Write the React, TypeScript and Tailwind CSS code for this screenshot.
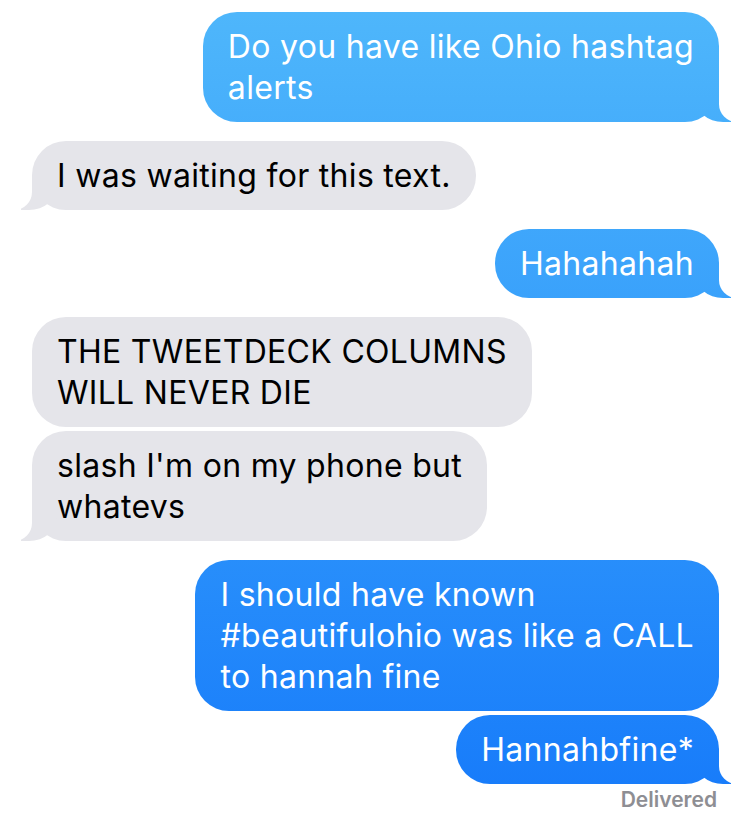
import clsx from "clsx";

type Message = {
  fromMe: boolean;
  lines: string[];
  tail: boolean;
};

const messages: Message[] = [
  { fromMe: true, lines: ["Do you have like Ohio hashtag", "alerts"], tail: true },
  { fromMe: false, lines: ["I was waiting for this text."], tail: true },
  { fromMe: true, lines: ["Hahahahah"], tail: true },
  { fromMe: false, lines: ["THE TWEETDECK COLUMNS", "WILL NEVER DIE"], tail: false },
  { fromMe: false, lines: ["slash I'm on my phone but", "whatevs"], tail: true },
  {
    fromMe: true,
    lines: ["I should have known", "#beautifulohio was like a CALL", "to hannah fine"],
    tail: false,
  },
  { fromMe: true, lines: ["Hannahbfine*"], tail: true },
];

function Bubble({ msg, first, sameAsPrev }: { msg: Message; first: boolean; sameAsPrev: boolean }) {
  return (
    <div
      className={clsx(
        "relative rounded-[34px] px-[25px] py-[14px] text-[32px] leading-[41px] tracking-[0.3px]",
        !first && (sameAsPrev ? "mt-[4px]" : "mt-[19px]"),
        msg.fromMe
          ? "self-end bg-fixed bg-linear-to-b from-[#4fb7fb] to-[#167afa] text-white"
          : "self-start bg-[#e5e5ea] text-black"
      )}
    >
      {msg.lines.map((line) => (
        <div key={line} className="relative z-10 whitespace-nowrap">
          {line}
        </div>
      ))}
      {msg.tail && msg.fromMe && (
        <>
          <span className="absolute bottom-0 -right-[12px] h-[34px] w-[36px] rounded-bl-[28px_24px] bg-fixed bg-linear-to-b from-[#4fb7fb] to-[#167afa]" />
          <span className="absolute bottom-0 -right-[44px] h-[34px] w-[44px] rounded-bl-[18px] bg-white" />
        </>
      )}
      {msg.tail && !msg.fromMe && (
        <>
          <span className="absolute bottom-0 -left-[11px] h-[34px] w-[36px] rounded-br-[28px_24px] bg-[#e5e5ea]" />
          <span className="absolute bottom-0 -left-[44px] h-[34px] w-[44px] rounded-br-[18px] bg-white" />
        </>
      )}
    </div>
  );
}

export default function App() {
  return (
    <div className="min-h-screen bg-white pl-[32px] pr-[31px] pt-[12px] font-['Inter','Helvetica_Neue',sans-serif] antialiased">
      <div className="flex flex-col">
        {messages.map((msg, i) => (
          <Bubble
            key={i}
            msg={msg}
            first={i === 0}
            sameAsPrev={i > 0 && messages[i - 1].fromMe === msg.fromMe}
          />
        ))}
        <div className="mt-[4px] self-end pr-[2px] text-[21px] font-semibold leading-[24px] text-[#8e8e93]">
          Delivered
        </div>
      </div>
    </div>
  );
}
